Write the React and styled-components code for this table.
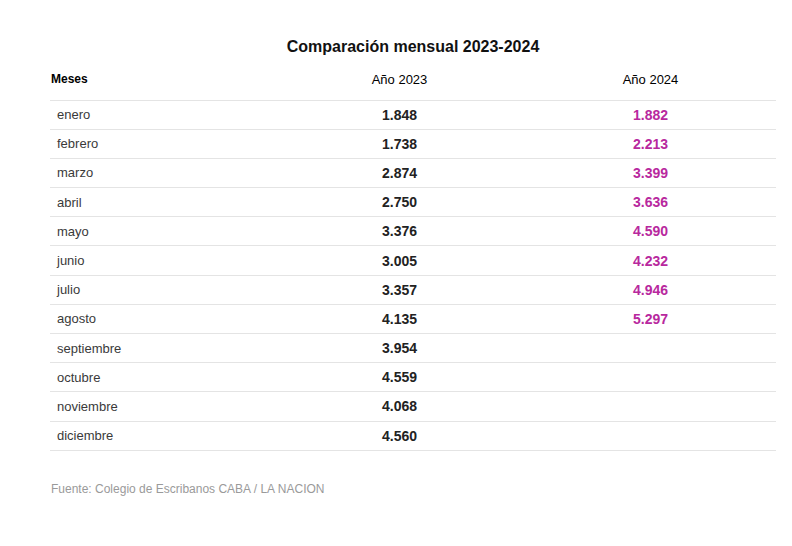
import React from 'react';
import styled, { createGlobalStyle } from 'styled-components';

const GlobalStyle = createGlobalStyle`
  body {
    margin: 0;
    background: #fff;
    font-family: "Liberation Sans", Arial, sans-serif;
  }
`;

const Wrapper = styled.div`
  width: 726px;
  padding: 37px 0 0 50px;
`;

const Title = styled.h4`
  margin: 0;
  font-size: 16px;
  line-height: 20px;
  font-weight: bold;
  color: #111;
  text-align: center;
`;

const Table = styled.table`
  width: 100%;
  border-collapse: collapse;
  table-layout: fixed;
`;

const Head = styled.th`
  height: 43px;
  box-sizing: border-box;
  padding: 0 0 13px ${(p) => (p.$left ? '1px' : '0')};
  vertical-align: bottom;
  text-align: ${(p) => (p.$left ? 'left' : 'center')};
  font-size: ${(p) => (p.$left ? '12px' : '13px')};
  font-weight: ${(p) => (p.$left ? 'bold' : 'normal')};
  line-height: 15px;
  color: #000;
  border-bottom: 1px solid #e4e4e4;
`;

const Row = styled.tr`
  height: 29.2px;
  border-bottom: 1px solid #e4e4e4;
`;

const Month = styled.td`
  padding: 0 0 0 7px;
  font-size: 13px;
  color: #3a3a3a;
`;

const Value = styled.td`
  padding: 0;
  text-align: center;
  font-size: 14px;
  font-weight: bold;
  color: ${(p) => (p.$accent ? '#b8289e' : '#222')};
`;

const Source = styled.p`
  margin: 31px 0 0 1px;
  font-size: 12px;
  color: #9a9a9a;
`;

const data = [
  ['enero', '1.848', '1.882'],
  ['febrero', '1.738', '2.213'],
  ['marzo', '2.874', '3.399'],
  ['abril', '2.750', '3.636'],
  ['mayo', '3.376', '4.590'],
  ['junio', '3.005', '4.232'],
  ['julio', '3.357', '4.946'],
  ['agosto', '4.135', '5.297'],
  ['septiembre', '3.954', ''],
  ['octubre', '4.559', ''],
  ['noviembre', '4.068', ''],
  ['diciembre', '4.560', ''],
];

export default function App() {
  return (
    <Wrapper>
      <GlobalStyle />
      <Title>Comparación mensual 2023-2024</Title>
      <Table>
        <colgroup>
          <col style={{ width: '224px' }} />
          <col style={{ width: '251px' }} />
          <col style={{ width: '251px' }} />
        </colgroup>
        <thead>
          <tr>
            <Head $left>Meses</Head>
            <Head>Año 2023</Head>
            <Head>Año 2024</Head>
          </tr>
        </thead>
        <tbody>
          {data.map(([month, a, b]) => (
            <Row key={month}>
              <Month>{month}</Month>
              <Value>{a}</Value>
              <Value $accent>{b}</Value>
            </Row>
          ))}
        </tbody>
      </Table>
      <Source>Fuente: Colegio de Escribanos CABA / LA NACION</Source>
    </Wrapper>
  );
}
